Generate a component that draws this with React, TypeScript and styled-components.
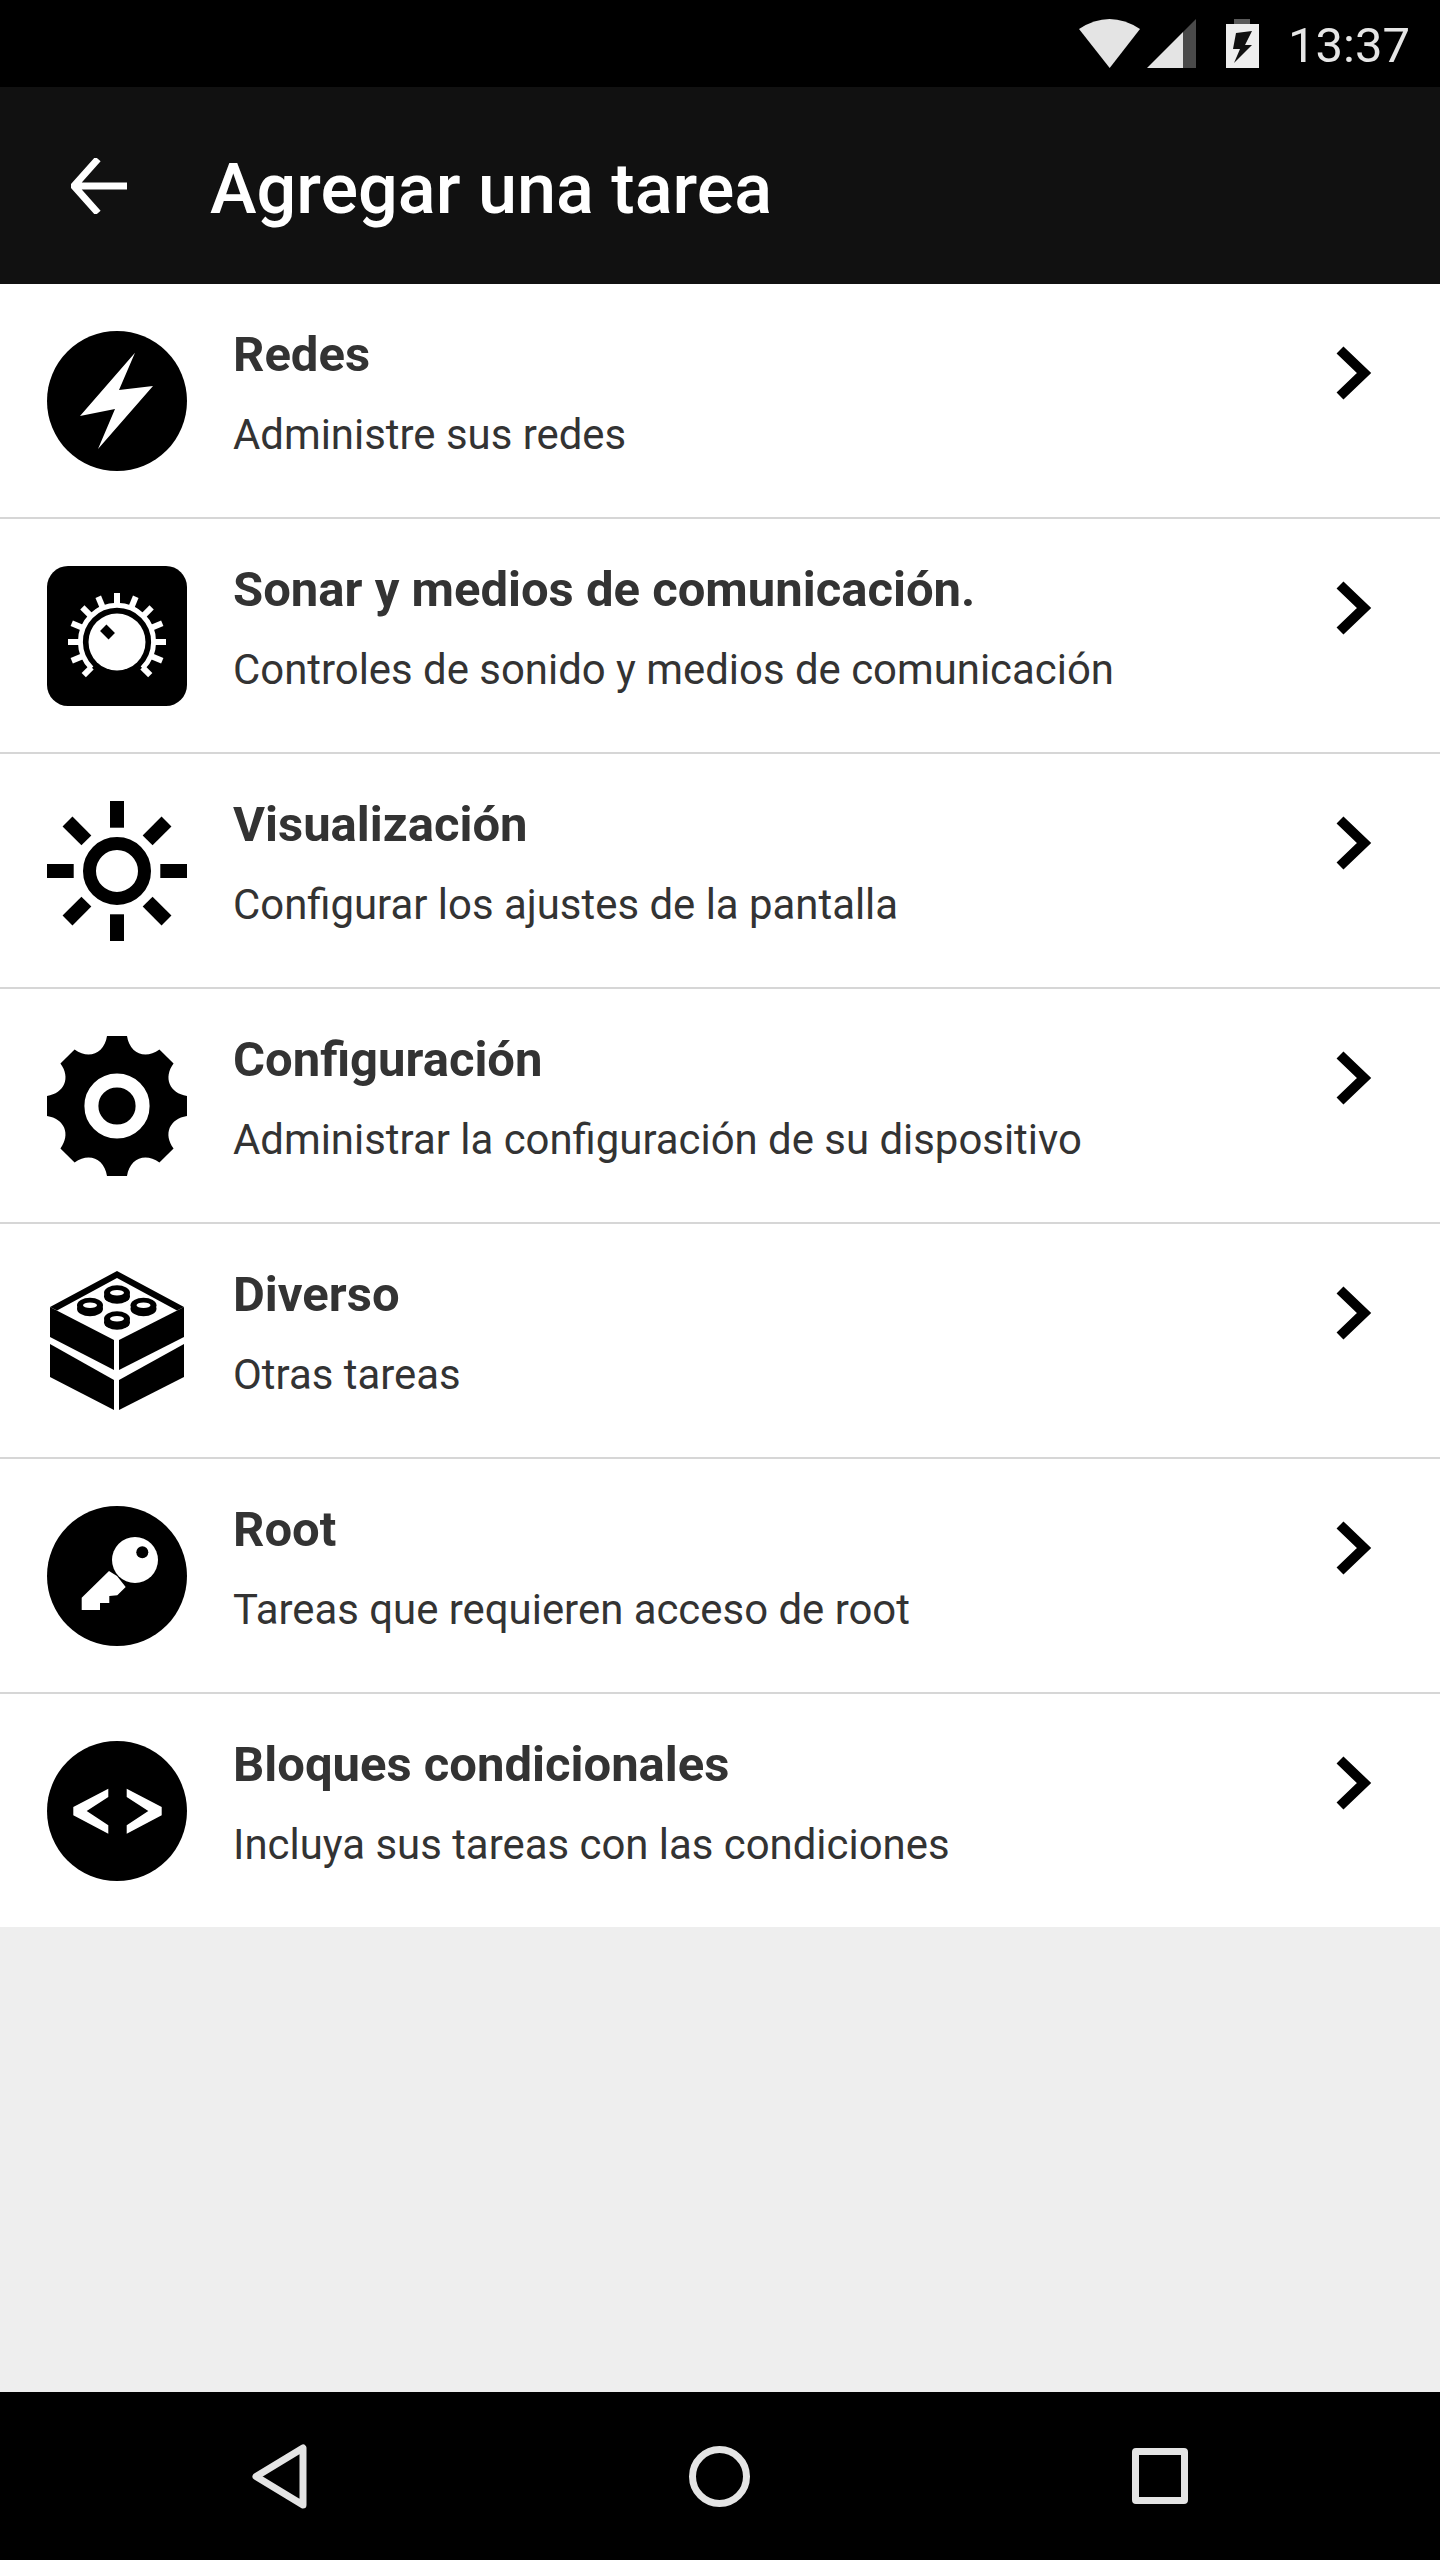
import styled, { createGlobalStyle } from "styled-components";

const GlobalStyle = createGlobalStyle`
  html, body {
    margin: 0;
    padding: 0;
    background: #eeeeee;
    font-family: Roboto, "Liberation Sans", sans-serif;
  }
`;

const tasks = [
  { icon: "bolt", title: "Redes", sub: "Administre sus redes" },
  {
    icon: "knob",
    title: "Sonar y medios de comunicación.",
    sub: "Controles de sonido y medios de comunicación",
  },
  { icon: "sun", title: "Visualización", sub: "Configurar los ajustes de la pantalla" },
  { icon: "gear", title: "Configuración", sub: "Administrar la configuración de su dispositivo" },
  { icon: "brick", title: "Diverso", sub: "Otras tareas" },
  { icon: "key", title: "Root", sub: "Tareas que requieren acceso de root" },
  { icon: "code", title: "Bloques condicionales", sub: "Incluya sus tareas con las condiciones" },
];

// polar point around the icon centre, angle in degrees from 12 o'clock
function polar(cx: number, cy: number, r: number, deg: number) {
  const a = (deg * Math.PI) / 180;
  return `${(cx + r * Math.sin(a)).toFixed(2)} ${(cy - r * Math.cos(a)).toFixed(2)}`;
}

function gearPath() {
  const parts: string[] = [];
  for (let i = 0; i < 8; i++) {
    const t = i * 45;
    parts.push(`${i === 0 ? "M" : "L"}${polar(70, 70, 70.7, t - 8.13)}`);
    parts.push(`L${polar(70, 70, 70.7, t + 8.13)}`);
    parts.push(
      `C${polar(70, 70, 54, t + 13.5)} ${polar(70, 70, 54, t + 31.5)} ${polar(70, 70, 70.7, t + 36.87)}`
    );
  }
  return parts.join(" ") + " Z";
}

const knobTicks = Array.from({ length: 13 }, (_, i) => i * 22.5 - 135);
const sunRays = [0, 45, 90, 135, 180, 225, 270, 315];
const brickStuds = [
  [70, 21.7],
  [43, 34.3],
  [96.5, 34.3],
  [70, 47.7],
];

function TaskIcon({ name }: { name: string }) {
  switch (name) {
    case "bolt":
      return (
        <svg width="140" height="140" viewBox="0 0 140 140">
          <circle cx="70" cy="70" r="70" fill="#000" />
          <path d="M88 21.7 L72 59 L106 55 L51 118 L68 78 L33 85 Z" fill="#fff" />
        </svg>
      );
    case "knob":
      return (
        <svg width="140" height="140" viewBox="0 0 140 140">
          <rect width="140" height="140" rx="21" fill="#000" />
          <circle cx="70" cy="76" r="28.5" fill="#fff" />
          <rect x="56" y="60" width="9" height="12" fill="#000" transform="rotate(-45 60.5 66)" />
          <path
            d="M44.6 102.2 A36.6 36.6 0 1 1 95.4 102.2"
            fill="none"
            stroke="#fff"
            strokeWidth="5"
          />
          <g stroke="#fff" strokeWidth="6">
            {knobTicks.map((deg) => {
              const from = polar(70, 76, 36, deg).split(" ");
              const to = polar(70, 76, Math.abs(deg) === 135 ? 47 : 49, deg).split(" ");
              return <line key={deg} x1={from[0]} y1={from[1]} x2={to[0]} y2={to[1]} />;
            })}
          </g>
        </svg>
      );
    case "sun":
      return (
        <svg width="140" height="140" viewBox="0 0 140 140">
          <circle cx="70" cy="70" r="27.5" fill="none" stroke="#000" strokeWidth="13" />
          <g fill="#000">
            {sunRays.map((deg) => (
              <rect key={deg} x="63" y="0" width="14" height="26.7" transform={`rotate(${deg} 70 70)`} />
            ))}
          </g>
        </svg>
      );
    case "gear":
      return (
        <svg width="140" height="140" viewBox="0 0 140 140">
          <path d={gearPath()} fill="#000" />
          <circle cx="70" cy="70" r="25.6" fill="none" stroke="#fff" strokeWidth="14" />
        </svg>
      );
    case "brick":
      return (
        <svg width="140" height="140" viewBox="0 0 140 140">
          <g fill="#000">
            <path d="M70 0 L137 36 L130 39.5 L70 7 L10 39.5 L3 36 Z" />
            <path d="M3 36 L67 69 L67 99 L3 66 Z" />
            <path d="M137 36 L72 69 L72 99 L137 66 Z" />
            <path d="M3 73 L67 109 L67 139 L3 106 Z" />
            <path d="M137 73 L72 109 L72 139 L137 106 Z" />
          </g>
          {brickStuds.map(([cx, cy]) => (
            <g key={`${cx}-${cy}`}>
              <ellipse cx={cx} cy={cy + 3.5} rx="13" ry="7.5" fill="#000" />
              <ellipse cx={cx} cy={cy} rx="13" ry="7.5" fill="#000" />
              <ellipse cx={cx} cy={cy} rx="7" ry="2.8" fill="#fff" />
            </g>
          ))}
        </svg>
      );
    case "key":
      return (
        <svg width="140" height="140" viewBox="0 0 140 140">
          <circle cx="70" cy="70" r="70" fill="#000" />
          <circle cx="88" cy="54" r="23" fill="#fff" />
          <circle cx="95.3" cy="46.3" r="6" fill="#000" />
          <path
            d="M62 65 L34.7 91.7 L34.7 104 L53 104 L53 97 L62.3 97 L62.3 90 L70.3 89.3 L78.7 81 L70 70 Z"
            fill="#fff"
          />
        </svg>
      );
    default:
      return (
        <svg width="140" height="140" viewBox="0 0 140 140">
          <circle cx="70" cy="70" r="70" fill="#000" />
          <path d="M61.3 47.7 L26.3 66 L26.3 74.3 L61.3 92.7 L61.3 84.3 L39.7 70 L61.3 56 Z" fill="#fff" />
          <path d="M79.7 47.7 L114.7 66 L114.7 74.3 L79.7 92.7 L79.7 84.3 L101.3 70 L79.7 56 Z" fill="#fff" />
        </svg>
      );
  }
}

export default function App() {
  return (
    <Screen>
      <GlobalStyle />
      <StatusBar>
        <StatusIcons>
          <svg width="61" height="49" viewBox="0 0 61 49">
            <path d="M0 10 Q30.5 -10 61 10 L30.7 49 Z" fill="#e4e4e4" />
          </svg>
          <SignalIcon width="49" height="49" viewBox="0 0 49 49">
            <path d="M36 13 L49 0 L49 49 L36 49 Z" fill="#4a4a4a" />
            <path d="M0 49 L36 13 L36 49 Z" fill="#e4e4e4" />
          </SignalIcon>
          <BatteryIcon width="33" height="49" viewBox="0 0 33 49">
            <rect x="8" y="0" width="16" height="5" fill="#5a5a5a" />
            <rect x="0" y="5" width="33" height="44" fill="#eeeeee" />
            <path d="M10 14 L26 12 L19 26 L26 26 L8 44 L14 30 L7 30 Z" fill="#111" />
          </BatteryIcon>
        </StatusIcons>
        <Clock>13:37</Clock>
      </StatusBar>
      <AppBar>
        <svg width="56" height="56" viewBox="0 0 56 56">
          <path d="M56 28 H4 M27 1 L3 28 L27 55" fill="none" stroke="#fff" strokeWidth="7" />
        </svg>
        <AppBarTitle>Agregar una tarea</AppBarTitle>
      </AppBar>
      <TaskList>
        {tasks.map((t) => (
          <TaskRow key={t.title}>
            <IconBox>
              <TaskIcon name={t.icon} />
            </IconBox>
            <TaskText>
              <TaskTitle>{t.title}</TaskTitle>
              <TaskSub>{t.sub}</TaskSub>
            </TaskText>
            <Chevron width="36" height="54" viewBox="0 0 36 54">
              <path d="M4 4 L28 27 L4 50" fill="none" stroke="#000" strokeWidth="10" />
            </Chevron>
          </TaskRow>
        ))}
      </TaskList>
      <Filler />
      <NavBar>
        <svg width="55" height="65" viewBox="0 0 55 65">
          <path d="M51 4 L51 61 L4 32.5 Z" fill="none" stroke="#e4e4e4" strokeWidth="7" strokeLinejoin="round" />
        </svg>
        <svg width="61" height="61" viewBox="0 0 61 61">
          <circle cx="30.5" cy="30.5" r="27" fill="none" stroke="#e4e4e4" strokeWidth="7" />
        </svg>
        <RecentSquare />
      </NavBar>
    </Screen>
  );
}

const Screen = styled.div`
  width: 1440px;
  height: 2560px;
  display: flex;
  flex-direction: column;
  background: #eeeeee;
  overflow: hidden;
`;

const StatusBar = styled.div`
  height: 87px;
  flex: none;
  background: #000;
  display: flex;
  align-items: center;
  justify-content: flex-end;
  padding-right: 30px;
  box-sizing: border-box;
`;

const StatusIcons = styled.div`
  display: flex;
  align-items: center;
  margin-right: 29px;
`;

const SignalIcon = styled.svg`
  margin-left: 7px;
`;

const BatteryIcon = styled.svg`
  margin-left: 30px;
`;

const Clock = styled.div`
  color: #e6e6e6;
  font-size: 49px;
  margin-top: 3px;
`;

const AppBar = styled.div`
  height: 197px;
  flex: none;
  background: #111111;
  display: flex;
  align-items: center;
  padding-left: 71px;
  box-sizing: border-box;
  gap: 83px;
`;

const AppBarTitle = styled.div`
  color: #fff;
  font-size: 70.2px;
  font-weight: 500;
  margin-top: 6px;
`;

const TaskList = styled.div`
  background: #fff;
  flex: none;
`;

const TaskRow = styled.div`
  height: 235px;
  box-sizing: border-box;
  display: flex;
  border-bottom: 2px solid #d6d6d6;
  padding: 47px 68px 0 47px;
  &:last-child {
    border-bottom: 0;
    height: 233px;
  }
`;

const IconBox = styled.div`
  width: 140px;
  height: 140px;
  flex: none;
  margin-right: 46px;
`;

const TaskText = styled.div`
  flex: 1;
  min-width: 0;
  margin-top: -9px;
`;

const TaskTitle = styled.div`
  font-size: 49px;
  font-weight: 700;
  line-height: 66px;
  color: #333333;
`;

const TaskSub = styled.div`
  font-size: 41.9px;
  line-height: 56px;
  margin-top: 19px;
  color: #333333;
`;

const Chevron = styled.svg`
  flex: none;
  margin-top: 15px;
`;

const Filler = styled.div`
  flex: 1;
  background: #eeeeee;
`;

const NavBar = styled.div`
  height: 168px;
  flex: none;
  background: #000;
  display: flex;
  align-items: center;
  gap: 382px;
  padding-left: 252px;
  box-sizing: border-box;
`;

const RecentSquare = styled.div`
  width: 56px;
  height: 56px;
  box-sizing: border-box;
  border: 7px solid #e4e4e4;
  border-radius: 4px;
`;
